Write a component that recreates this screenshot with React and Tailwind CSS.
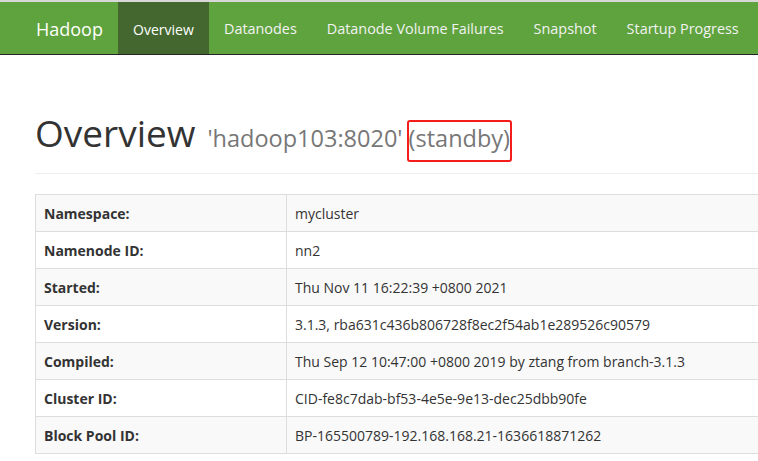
import React from "react";

const rows = [
  ["Namespace:", "mycluster"],
  ["Namenode ID:", "nn2"],
  ["Started:", "Thu Nov 11 16:22:39 +0800 2021"],
  ["Version:", "3.1.3, rba631c436b806728f8ec2f54ab1e289526c90579"],
  ["Compiled:", "Thu Sep 12 10:47:00 +0800 2019 by ztang from branch-3.1.3"],
  ["Cluster ID:", "CID-fe8c7dab-bf53-4e5e-9e13-dec25dbb90fe"],
  ["Block Pool ID:", "BP-165500789-192.168.168.21-1636618871262"],
];

const navItems = ["Datanodes", "Datanode Volume Failures", "Snapshot", "Startup Progress"];

export default function App() {
  return (
    <div
      className="w-[758px] h-[461px] overflow-hidden bg-white text-[#333]"
      style={{ fontFamily: '"Open Sans", "Noto Sans", sans-serif' }}
    >
      <div className="h-[2px] bg-[#d8d8d8]" />
      <nav className="flex h-[53px] bg-[#5fa33e] border-b border-[#252525] pl-[21px]">
        <div className="flex items-center pt-[2px] px-[15px] text-[18px] text-white">Hadoop</div>
        <div className="flex items-center pt-[2px] px-[15px] w-[91px] justify-center text-[14px] text-white bg-[#43672f]">Overview</div>
        {navItems.map((n) => (
          <div key={n} className="flex items-center pt-[2px] px-[15px] text-[14.4px] text-[#f2f2f2] whitespace-nowrap">
            {n}
          </div>
        ))}
      </nav>
      <main className="pl-[35px] pt-[58px]">
        <div className="border-b border-[#eeeeee] pb-[20px] w-[900px]">
          <h1 className="text-[37px] leading-[40px] h-[40px] font-normal whitespace-nowrap">
            Overview
            <small className="ml-[12px] text-[23.5px] leading-none text-[#777]">
              'hadoop103:8020'{" "}
              <span className="relative">
                (standby)
                <span className="absolute top-[-2px] bottom-[-8px] left-[-2px] right-[-2px] border-2 border-[#f51c1c] rounded-[3px]" />
              </span>
            </small>
          </h1>
        </div>
        <table className="mt-[20px] w-[900px] border-collapse border border-[#dddddd] text-[14px] leading-[20px]">
          <tbody>
            {rows.map(([k, v], i) => (
              <tr key={k} className={i % 2 === 0 ? "bg-[#f9f9f9]" : "bg-white"}>
                <th className="w-[251px] h-[37px] border border-[#dddddd] px-[8px] pt-[2px] pb-0 text-left font-bold whitespace-nowrap">{k}</th>
                <td className="h-[37px] border border-[#dddddd] px-[8px] pt-[2px] pb-0 whitespace-nowrap">{v}</td>
              </tr>
            ))}
          </tbody>
        </table>
      </main>
    </div>
  );
}
